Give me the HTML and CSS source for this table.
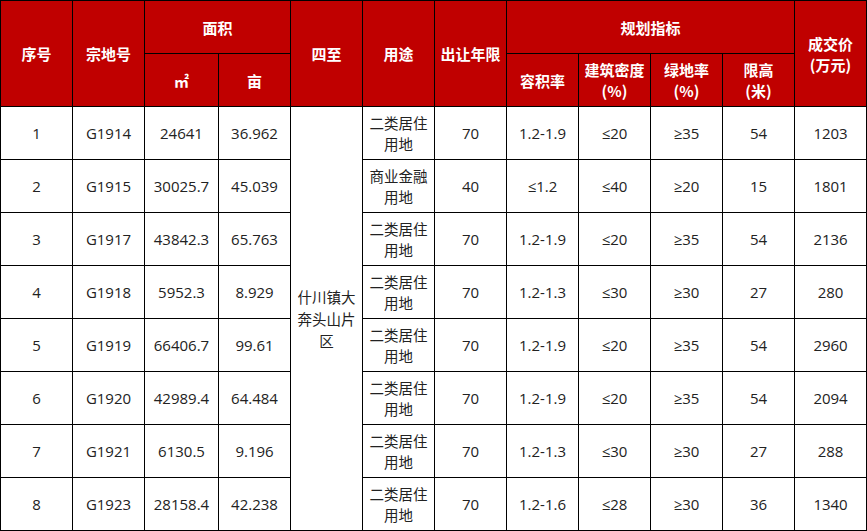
FILE: index.html
```html
<!DOCTYPE html>
<html lang="zh">
<head>
<meta charset="utf-8">
<link rel="stylesheet" href="styles.css">
</head>
<body>
<table class="land">
  <colgroup>
    <col class="c72"><col class="c72"><col class="c74"><col class="c72"><col class="c72"><col class="c72">
    <col class="c72"><col class="c72"><col class="c72"><col class="c72"><col class="c72"><col class="c72">
  </colgroup>
  <thead>
    <tr>
      <th rowspan="2">序号</th>
      <th rowspan="2">宗地号</th>
      <th colspan="2">面积</th>
      <th rowspan="2">四至</th>
      <th rowspan="2">用途</th>
      <th rowspan="2">出让年限</th>
      <th colspan="4">规划指标</th>
      <th rowspan="2">成交价<br>(万元)</th>
    </tr>
    <tr>
      <th>㎡</th>
      <th>亩</th>
      <th>容积率</th>
      <th>建筑密度<br>(%)</th>
      <th>绿地率<br>(%)</th>
      <th>限高<br>(米)</th>
    </tr>
  </thead>
  <tbody>
    <tr><td>1</td><td>G1914</td><td>24641</td><td>36.962</td><td rowspan="8" class="area">什川镇大奔头山片区</td><td class="use">二类居住用地</td><td>70</td><td>1.2-1.9</td><td>≤20</td><td>≥35</td><td>54</td><td>1203</td></tr>
    <tr><td>2</td><td>G1915</td><td>30025.7</td><td>45.039</td><td class="use">商业金融用地</td><td>40</td><td>≤1.2</td><td>≤40</td><td>≥20</td><td>15</td><td>1801</td></tr>
    <tr><td>3</td><td>G1917</td><td>43842.3</td><td>65.763</td><td class="use">二类居住用地</td><td>70</td><td>1.2-1.9</td><td>≤20</td><td>≥35</td><td>54</td><td>2136</td></tr>
    <tr><td>4</td><td>G1918</td><td>5952.3</td><td>8.929</td><td class="use">二类居住用地</td><td>70</td><td>1.2-1.3</td><td>≤30</td><td>≥30</td><td>27</td><td>280</td></tr>
    <tr><td>5</td><td>G1919</td><td>66406.7</td><td>99.61</td><td class="use">二类居住用地</td><td>70</td><td>1.2-1.9</td><td>≤20</td><td>≥35</td><td>54</td><td>2960</td></tr>
    <tr><td>6</td><td>G1920</td><td>42989.4</td><td>64.484</td><td class="use">二类居住用地</td><td>70</td><td>1.2-1.9</td><td>≤20</td><td>≥35</td><td>54</td><td>2094</td></tr>
    <tr><td>7</td><td>G1921</td><td>6130.5</td><td>9.196</td><td class="use">二类居住用地</td><td>70</td><td>1.2-1.3</td><td>≤30</td><td>≥30</td><td>27</td><td>288</td></tr>
    <tr><td>8</td><td>G1923</td><td>28158.4</td><td>42.238</td><td class="use">二类居住用地</td><td>70</td><td>1.2-1.6</td><td>≤28</td><td>≥30</td><td>36</td><td>1340</td></tr>
  </tbody>
</table>
</body>
</html>
```

FILE: styles.css
```css
html, body {
  margin: 0;
  padding: 0;
  background: #ffffff;
}
.land {
  border-collapse: collapse;
  table-layout: fixed;
  width: 867px;
  font-family: "Open Sans", "Noto Sans CJK SC", sans-serif;
}
.c72 { width: 72px; }
.c74 { width: 74px; }
.land th, .land td {
  border: 1px solid #000000;
  text-align: center;
  vertical-align: middle;
  padding: 0;
  height: 53px;
  box-sizing: border-box;
}
.land th {
  background: #c00000;
  color: #ffffff;
  font-weight: bold;
  font-size: 15px;
  line-height: 21px;
  font-family: "Noto Sans CJK SC", sans-serif;
}
.land td {
  color: #222222;
  font-size: 15px;
  line-height: 21px;
}
.land td.use {
  font-family: "Noto Sans CJK SC", sans-serif;
  font-size: 14.5px;
}
.land td.area {
  font-family: "Noto Sans CJK SC", sans-serif;
  font-size: 14.5px;
  line-height: 22px;
}
```
